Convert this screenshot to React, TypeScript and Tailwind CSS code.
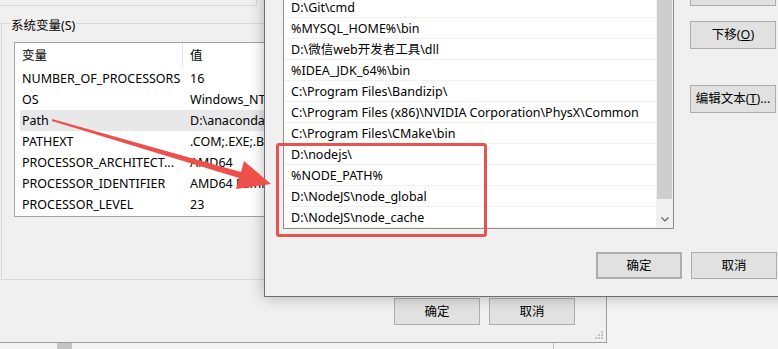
const sysVars = [
  { name: "NUMBER_OF_PROCESSORS", value: "16" },
  { name: "OS", value: "Windows_NT" },
  { name: "Path", value: "D:\\anaconda3;D:\\anaconda3\\Scripts" },
  { name: "PATHEXT", value: ".COM;.EXE;.BAT;.CMD" },
  { name: "PROCESSOR_ARCHITECT...", value: "AMD64" },
  { name: "PROCESSOR_IDENTIFIER", value: "AMD64 Family 23 Model 113" },
  { name: "PROCESSOR_LEVEL", value: "23" },
];

const paths = [
  "D:\\Git\\cmd",
  "%MYSQL_HOME%\\bin",
  "D:\\微信web开发者工具\\dll",
  "%IDEA_JDK_64%\\bin",
  "C:\\Program Files\\Bandizip\\",
  "C:\\Program Files (x86)\\NVIDIA Corporation\\PhysX\\Common",
  "C:\\Program Files\\CMake\\bin",
  "D:\\nodejs\\",
  "%NODE_PATH%",
  "D:\\NodeJS\\node_global",
  "D:\\NodeJS\\node_cache",
];

function Btn({ children, className = "" }: { children: React.ReactNode; className?: string }) {
  return (
    <div
      className={`flex items-center justify-center w-[86px] h-[27px] bg-[#e1e1e1] border border-[#adadad] text-[12.5px] text-black ${className}`}
    >
      {children}
    </div>
  );
}

export default function App() {
  return (
    <div className="relative w-[778px] h-[349px] overflow-hidden bg-[#f4f4f4] font-[family-name:Noto_Sans,Noto_Sans_CJK_SC,sans-serif] text-[12.5px] leading-[18px] text-black">
      {/* desktop bits under the windows */}
      <div className="absolute left-[57px] top-[343px] w-[15px] h-[6px] bg-[#c4c4c4]" />
      <div className="absolute left-[553px] top-[340px] w-px h-[9px] bg-[#bdbdbd]" />

      {/* 环境变量 dialog (back) */}
      <div className="absolute left-0 top-0 w-[607px] h-[343px] bg-[#f0f0f0] border-r border-b border-[#9d9d9d] flex flex-col">
        <div className="h-[6px] w-[257px] border-b border-r border-[#d9d9d9]" />

        <div className="relative mt-[17px] ml-px w-[600px] h-[257px] border border-[#d9d9d9]">
          <div className="absolute left-[8px] top-[-7px] bg-[#f0f0f0] px-px">系统变量(S)</div>

          <div className="mt-[18px] ml-[12px] w-[400px] h-[175px] bg-white border border-[#a3a3a3]">
            <div className="flex h-[25px] items-center">
              <div className="w-[168px] pl-[7px] h-full flex items-center border-r border-[#e5e5e5]">变量</div>
              <div className="pl-[7px]">值</div>
            </div>
            {sysVars.map((v) => (
              <div
                key={v.name}
                className={`ml-[5px] flex h-[21px] items-center whitespace-nowrap ${v.name === "Path" ? "bg-[#e8e8e8]" : ""}`}
              >
                <div className="w-[168px] pl-[2px]">{v.name}</div>
                <div className="pl-[2px]">{v.value}</div>
              </div>
            ))}
          </div>
        </div>

        <div className="mt-[18px] ml-[394px] flex gap-[9px]">
          <Btn>确定</Btn>
          <Btn>取消</Btn>
        </div>

        {/* resize grip */}
        <svg className="absolute right-[3px] bottom-[3px]" width="9" height="9" viewBox="0 0 9 9">
          {[
            [7, 1],
            [4, 4],
            [7, 4],
            [1, 7],
            [4, 7],
            [7, 7],
          ].map(([x, y], i) => (
            <rect key={i} x={x} y={y} width="2" height="2" fill="#c2c2c2" />
          ))}
        </svg>
      </div>

      {/* 编辑环境变量 dialog (front) */}
      <div className="absolute left-[264px] top-[-40px] w-[540px] h-[337px] bg-[#f0f0f0] border border-[#6e6e6e] shadow-[0_0_14px_rgba(0,0,0,0.28)] flex flex-col">
        <div className="flex">
          <div className="ml-[18px] mt-[35px] w-[391px] h-[233px] bg-white border border-[#8f8f8f] flex">
            <div className="flex-1 flex flex-col">
              {paths.map((p) => (
                <div key={p} className="h-[21px] shrink-0 flex items-center pl-[7px] pt-[2px] border-b border-[#f0f0f0] whitespace-nowrap">
                  {p}
                </div>
              ))}
            </div>
            <div className="w-[17px] bg-[#f0f0f0] flex flex-col">
              <div className="mx-px h-[202px] bg-[#cdcdcd]" />
              <div className="flex-1" />
              <div className="h-[17px] flex items-center justify-center">
                <svg width="8" height="5" viewBox="0 0 8 5">
                  <path d="M0.5 0.5 L4 4 L7.5 0.5" fill="none" stroke="#606060" strokeWidth="1.2" />
                </svg>
              </div>
            </div>
          </div>

          <div className="ml-[16px] mt-[17px] flex flex-col">
            <Btn className="h-[28px]">上移(U)</Btn>
            <Btn className="h-[28px] mt-[15px]">
              下移(<span className="underline">O</span>)
            </Btn>
            <Btn className="h-[28px] mt-[36px]">
              编辑文本(<span className="underline">T</span>)...
            </Btn>
          </div>
        </div>

        <div className="mt-[23px] ml-[331px] flex gap-[9px]">
          <Btn className="border-2 border-[#0078d7]">确定</Btn>
          <Btn>取消</Btn>
        </div>
      </div>

      {/* red highlight box */}
      <div className="absolute left-[276px] top-[143px] w-[211px] h-[94px] border-[3px] border-[#e9534f] rounded-[3px]" />

      {/* red arrow */}
      <svg className="absolute left-0 top-0" width="778" height="349" viewBox="0 0 778 349">
        <polygon
          points="52,119 241,172 244,161 271,184 236,189 239,178 52,121"
          fill="#ee4f4a"
        />
      </svg>
    </div>
  );
}
